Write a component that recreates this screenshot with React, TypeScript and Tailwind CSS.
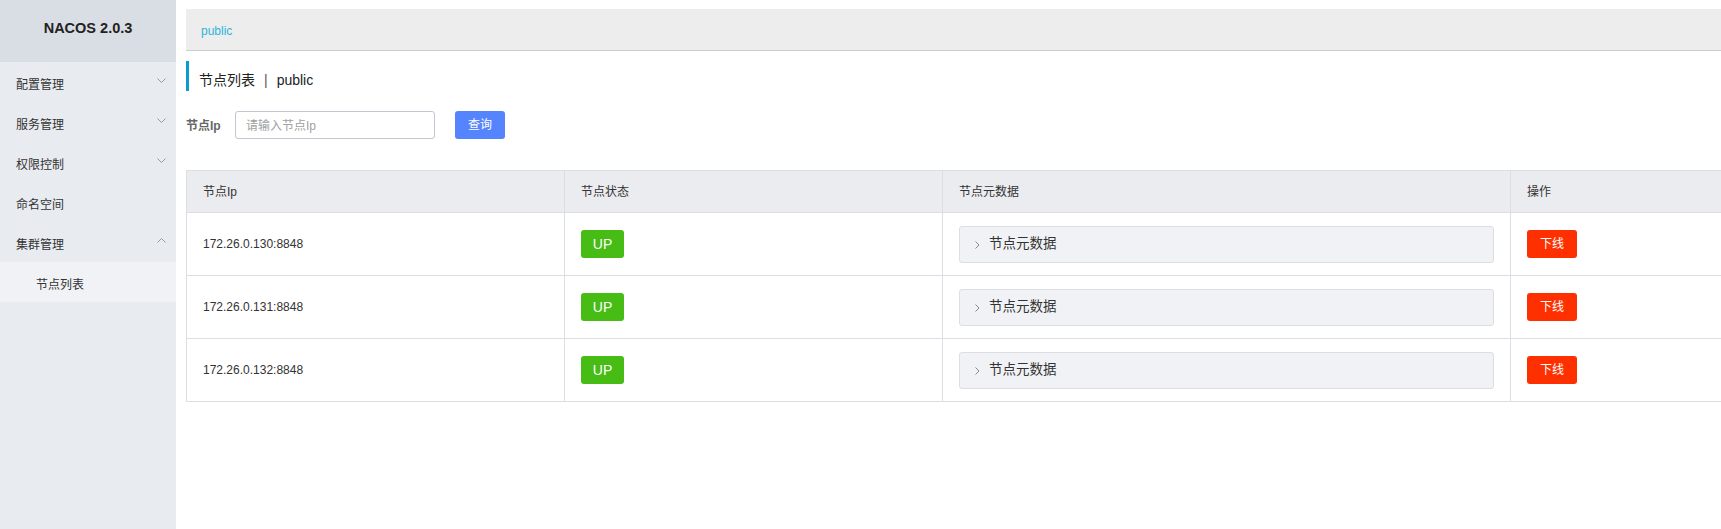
import React from "react";

const FONT = { fontFamily: '"Liberation Sans", Arial, "Noto Sans CJK SC", sans-serif' };

type MenuItem = { label: string; arrow?: "down" | "up" };

const menu: MenuItem[] = [
  { label: "配置管理", arrow: "down" },
  { label: "服务管理", arrow: "down" },
  { label: "权限控制", arrow: "down" },
  { label: "命名空间" },
  { label: "集群管理", arrow: "up" },
];

const nodes = ["172.26.0.130:8848", "172.26.0.131:8848", "172.26.0.132:8848"];

function Chevron({ dir }: { dir: "down" | "up" | "right" }) {
  if (dir === "right")
    return (
      <svg width="5" height="8" viewBox="0 0 5 8" className="shrink-0">
        <path d="M0.5 0.5 L4 4 L0.5 7.5" fill="none" stroke="#888" strokeWidth="1" />
      </svg>
    );
  return (
    <svg width="9" height="5" viewBox="0 0 9 5" className="shrink-0">
      <path
        d={dir === "down" ? "M0.5 0.5 L4.5 4.5 L8.5 0.5" : "M0.5 4.5 L4.5 0.5 L8.5 4.5"}
        fill="none"
        stroke="#9a9a9a"
        strokeWidth="1"
      />
    </svg>
  );
}

function Sidebar() {
  return (
    <div className="w-[176px] shrink-0 h-full bg-[#e8ebf0] flex flex-col">
      <div className="h-[62px] bg-[#d9dde4] flex items-center justify-center pb-[4px]">
        <span className="text-[14.5px] font-bold text-[#222]">NACOS 2.0.3</span>
      </div>
      {menu.map((m) => (
        <div key={m.label} className="h-[40px] flex items-center justify-between pl-[16px] pr-[10px] pt-[6px]">
          <span className="text-[12px] text-[#333]">{m.label}</span>
          {m.arrow && (
            <span className="-mt-[10px]">
              <Chevron dir={m.arrow} />
            </span>
          )}
        </div>
      ))}
      <div className="h-[40px] flex items-center pl-[36px] pt-[6px] bg-[#f1f2f5]">
        <span className="text-[12px] text-[#333]">节点列表</span>
      </div>
    </div>
  );
}

const cols = ["w-[378px]", "w-[378px]", "w-[568px]", "w-[378px]"];

function NodeTable() {
  const head = ["节点Ip", "节点状态", "节点元数据", "操作"];
  return (
    <div className="w-[1702px] border-t border-l border-[#dcdee3] text-[12px] text-[#333]">
      <div className="flex h-[42px] bg-[#ebecf0] border-b border-[#dcdee3]">
        {head.map((h, i) => (
          <div key={h} className={`${cols[i]} shrink-0 border-r border-[#dcdee3] flex items-center pl-[16px]`}>
            {h}
          </div>
        ))}
      </div>
      {nodes.map((ip) => (
        <div key={ip} className="flex h-[63px] border-b border-[#dcdee3]">
          <div className={`${cols[0]} shrink-0 border-r border-[#dcdee3] flex items-center pl-[16px]`}>{ip}</div>
          <div className={`${cols[1]} shrink-0 border-r border-[#dcdee3] flex items-center pl-[16px]`}>
            <span className="w-[43px] h-[28px] rounded-[3px] bg-[#46bc15] text-white text-[14px] flex items-center justify-center">
              UP
            </span>
          </div>
          <div className={`${cols[2]} shrink-0 border-r border-[#dcdee3] flex items-center px-[16px]`}>
            <div className="w-full h-[37px] rounded-[3px] border border-[#dcdee3] bg-[#f1f2f5] flex items-center pl-[15px] gap-[9px] pt-[1px]">
              <Chevron dir="right" />
              <span className="text-[13.5px] text-[#333]">节点元数据</span>
            </div>
          </div>
          <div className={`${cols[3]} shrink-0 border-r border-[#dcdee3] flex items-center pl-[16px]`}>
            <span className="w-[50px] h-[28px] rounded-[3px] bg-[#ff3000] text-white text-[12px] flex items-center justify-center">
              下线
            </span>
          </div>
        </div>
      ))}
    </div>
  );
}

export default function App() {
  return (
    <div className="flex w-full h-[529px] bg-white overflow-hidden" style={FONT}>
      <Sidebar />
      <div className="flex-1 min-w-0 overflow-hidden pl-[10px] pt-[9px]">
        <div className="h-[42px] bg-[#ededed] border-b border-[#cccccc] flex items-center pl-[15px] pt-[2px]">
          <span className="text-[12px] text-[#2fb4d9]">public</span>
        </div>
        <div className="mt-[10px] h-[30px] border-l-[3px] border-[#0a9bd2] flex items-center pl-[10px] pt-[8px] text-[14px] text-[#222]">
          <span>节点列表</span>
          <span className="mx-[9px] text-[#555]">|</span>
          <span>public</span>
        </div>
        <div className="mt-[20px] flex items-center h-[28px]">
          <span className="text-[12px] font-bold text-[#666] w-[49px] pt-[2px]">节点Ip</span>
          <div className="w-[200px] h-[28px] border border-[#c4c6cf] rounded-[3px] flex items-center pl-[10px] pt-[1px]">
            <span className="text-[12px] text-[#a0a0a0]">请输入节点Ip</span>
          </div>
          <button className="ml-[20px] w-[50px] h-[28px] rounded-[3px] bg-[#5584ff] text-white text-[12px]">查询</button>
        </div>
        <div className="mt-[31px]">
          <NodeTable />
        </div>
      </div>
    </div>
  );
}
